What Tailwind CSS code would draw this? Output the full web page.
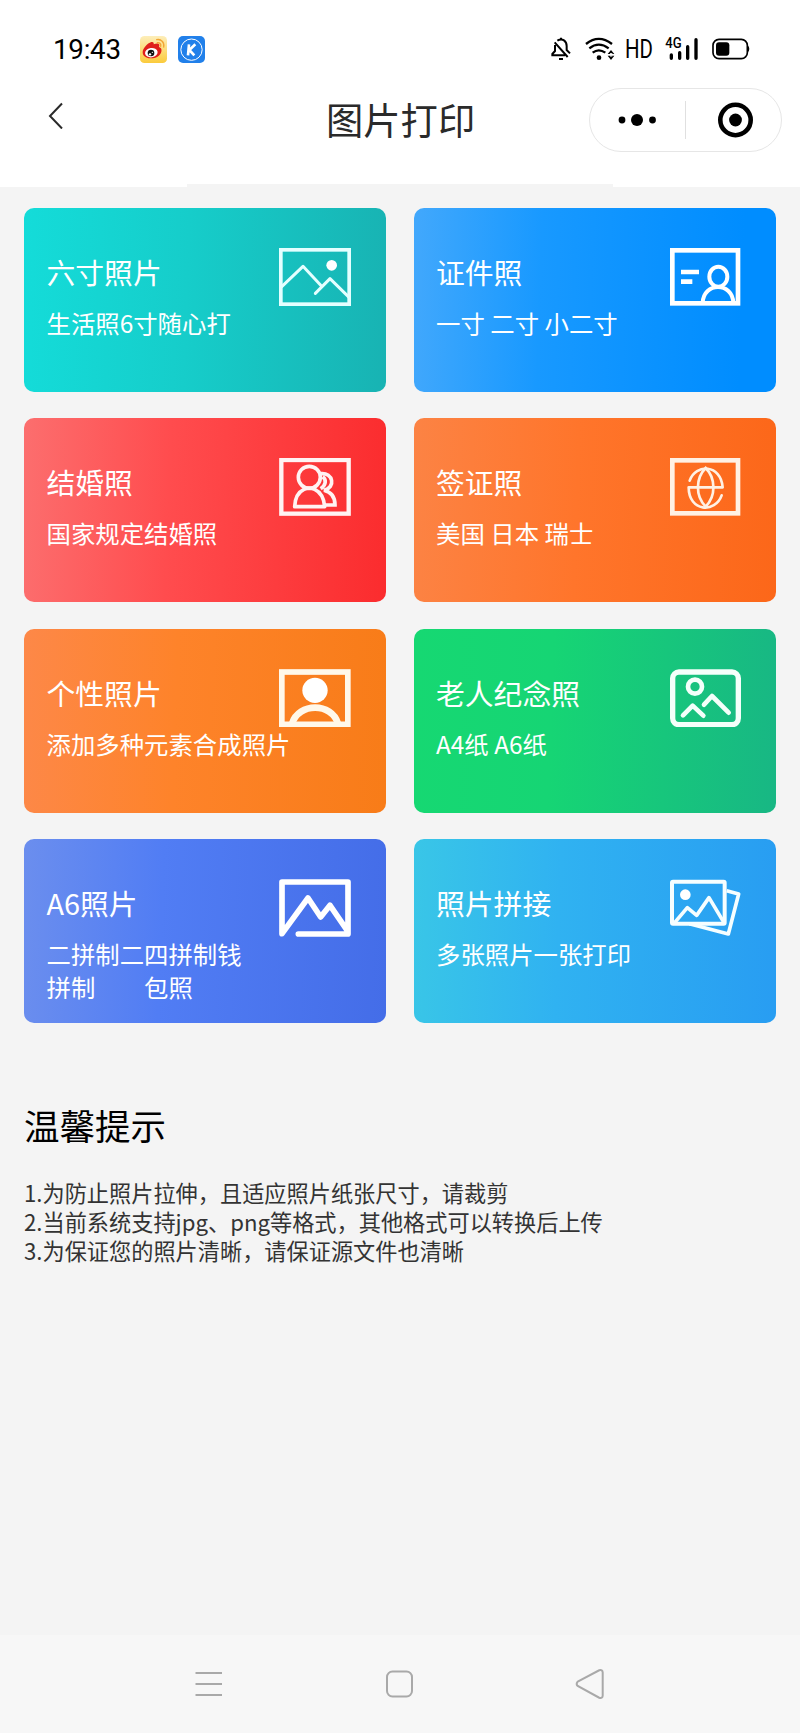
<!DOCTYPE html>
<html lang="zh-CN">
<head>
    <meta charset="UTF-8">
    <meta name="viewport" content="width=device-width, initial-scale=1.0">
    <title>图片打印</title>
    <script src="https://cdn.jsdelivr.net/npm/@tailwindcss/browser@4"></script>
    <style>
        body { font-family: 'Noto Sans CJK SC', sans-serif; }
    </style>
</head>
<body class="bg-[#f4f4f4] w-[800px] h-[1733px] flex flex-col font-normal overflow-hidden">

<!-- Status bar + nav bar -->
<header class="bg-white h-[187px] shrink-0 relative">
    <div class="flex items-center h-[98px] pl-[53px] pr-[50px] text-black">
        <span class="w-[68px] pt-[1px] text-[27.800px] leading-none tracking-[-0.3px] font-normal whitespace-nowrap" style="font-family: Roboto, sans-serif">19:43</span>
        <svg class="ml-[19px] w-[27px] h-[27px]" viewBox="420 106 81 81">
            <defs><linearGradient id="wb" x1="0" y1="0" x2="0" y2="1"><stop offset="0" stop-color="#fdeeba"/><stop offset="1" stop-color="#fbcb3c"/></linearGradient></defs>
            <rect x="420" y="106" width="81" height="81" rx="13" fill="url(#wb)"/>
            <path d="M428 155c0-12 14-27 26-31 7-1 8 3 7 7 8-4 17-4 17 2 0 3-1 5-1 6 6 2 9 6 7 14-3 13-17 20-31 20-14 1-25-7-25-18z" fill="#df1f1c"/>
            <ellipse cx="454" cy="156" rx="19" ry="14" fill="#fff" transform="rotate(-8 454 156)"/>
            <circle cx="453" cy="157" r="10" fill="#111"/>
            <circle cx="450" cy="161" r="3.5" fill="#fff"/><circle cx="457" cy="155" r="2" fill="#fff"/>
            <path d="M470 117c13-3 24 8 21 22M472 126c7-1 12 4 10 11" fill="none" stroke="#f2a535" stroke-width="4" stroke-linecap="round"/>
        </svg>
        <svg class="ml-[11px] w-[27px] h-[27px]" viewBox="535 106 81 81">
            <rect x="535" y="106" width="81" height="81" rx="15" fill="#2180ea"/>
            <circle cx="575.5" cy="147" r="32" fill="none" stroke="#fff" stroke-width="3"/>
            <path d="M568 131l-3 33M587 131l-18 17 15 16" fill="none" stroke="#fff" stroke-width="8"/>
        </svg>

        <svg class="ml-auto w-[22px] h-[24px]" viewBox="451 111 66 72" fill="none" stroke="#000" stroke-width="6">
            <path d="M462 127l39 44M470 122c16-10 28 2 28 16v12l10 10M463 135v18l-8 9v4h38"/>
            <path d="M481 113v5M475 177h12"/>
        </svg>
        <svg class="ml-[12px] w-[31px] h-[24px]" viewBox="554 111 93 72" fill="none" stroke="#000" stroke-width="7">
            <path d="M557 132q38-31 78 0M567 145q28-22 58 0M577 158q18-14 38 0"/>
            <circle cx="596" cy="173" r="7" fill="#000" stroke="none"/>
            <path d="M622 162l10-12 10 12zM622 167l10 13 10-13z" fill="#000" stroke="none"/>
            <path d="M629 161h7M629 168h7" stroke="#fff" stroke-width="3"/>
        </svg>
        <svg class="ml-[9px] w-[30px] h-[32px] overflow-visible" viewBox="0 -4 30 32">
            <text x="0" y="20.5" font-family="Roboto, sans-serif" font-size="25" font-weight="400" textLength="28" lengthAdjust="spacingAndGlyphs">HD</text>
        </svg>
        <svg class="ml-[10px] w-[34px] h-[32px] overflow-visible" viewBox="795 99 102 96">
            <text x="796" y="145" font-family="Roboto, sans-serif" font-size="42" font-weight="500" textLength="49" lengthAdjust="spacingAndGlyphs">4G</text>
            <path d="M814 165v10M839 158v17M863 140v35M888 119v56" stroke="#000" stroke-width="10" stroke-linecap="round"/>
        </svg>
        <svg class="ml-[13px] w-[38px] h-[24px]" viewBox="935 111 114 72">
            <rect x="938" y="118" width="103" height="58" rx="18" fill="none" stroke="#000" stroke-width="5"/>
            <rect x="947" y="127" width="40" height="40" rx="9"/>
            <path d="M1042 136q10 11 0 22z"/>
        </svg>
    </div>

    <div class="flex items-center h-[44px] pl-[47px] pr-[18px]">
        <svg class="w-[18px] h-[28px] -mt-[10px]" viewBox="0 0 18 28" fill="none" stroke="#2a2a2a" stroke-width="2"><path d="M15 2.5L3 15l12 12.5"/></svg>
        <h1 class="ml-[261px] w-[150px] -mt-[3px] text-[37.3px] leading-[44px] text-[#2a2a2a] whitespace-nowrap">图片打印</h1>
        <div class="ml-auto w-[193px] h-[64px] -mt-[1px] shrink-0 rounded-full border border-[#e6e6e6] flex items-center">
            <svg class="w-[95px] h-[20px]" viewBox="0 0 95 20"><circle cx="32" cy="10" r="3.4"/><circle cx="47" cy="10" r="6"/><circle cx="62.500" cy="10" r="3.4"/></svg>
            <div class="w-px h-[38px] bg-[#e0e0e0]"></div>
            <svg class="w-[95px] h-[38px]" viewBox="0 0 95 38"><circle cx="49.500" cy="19" r="15.200" fill="none" stroke="#000" stroke-width="4.600"/><circle cx="49.500" cy="19" r="6.400"/></svg>
        </div>
    </div>
    <div class="absolute left-[187px] bottom-0 w-[426px] h-[3px] bg-[#f4f4f4]"></div>
</header>

<main class="flex-1 pt-[21px] pl-[24px] pr-[24px]">
    <div class="grid grid-cols-[362px_362px] gap-x-[28px] gap-y-[26.300px] text-white">

        <section class="h-[184px] rounded-[10px] pt-[40px] pl-[22.500px] pr-[35px] bg-linear-[92deg,#14dcd9,#16cdca_45%,#18b3b3]">
            <div class="flex justify-between h-[58px]">
                <h2 class="text-[28.800px] leading-[47px]">六寸照片</h2>
                <svg class="w-[72px] h-[58px]" viewBox="837 159 216 174" fill="none" stroke="#e4ffff" stroke-width="9">
                    <rect x="842.500" y="164.500" width="205" height="163" stroke-width="11"/>
                    <path d="M846 274l63-60 56 60M946 295l44-44 55 54" stroke-linejoin="round" stroke-linecap="round"/>
                    <circle cx="995" cy="211" r="16" fill="#fff" stroke="none"/>
                </svg>
            </div>
            <p class="text-[24.400px] leading-[33px] whitespace-nowrap">生活照6寸随心打</p>
        </section>

        <section class="h-[184px] rounded-[10px] pt-[40px] pl-[22px] pr-[35px] bg-linear-[92deg,#42a8fc,#1899ff_35%,#008dff_90%]">
            <div class="flex justify-between h-[58px]">
                <h2 class="text-[28.800px] leading-[47px]">证件照</h2>
                <svg class="w-[72px] h-[58px]" viewBox="807 159 216 174" fill="none" stroke="#fff" stroke-width="12">
                    <rect x="817" y="166" width="197" height="159" stroke-width="14"/>
                    <path d="M843 231h54M843 260h34" stroke-width="14"/>
                    <ellipse cx="955" cy="245" rx="27" ry="30"/>
                    <path d="M908 324c2-64 90-64 92 0"/>
                </svg>
            </div>
            <p class="text-[24.400px] leading-[33px] whitespace-nowrap">一寸 二寸 小二寸</p>
        </section>

        <section class="h-[184px] rounded-[10px] pt-[40px] pl-[22.500px] pr-[35px] bg-linear-[92deg,#fc6e6e,#ff4c4e_40%,#fb2c2e]">
            <div class="flex justify-between h-[58px]">
                <h2 class="text-[28.800px] leading-[47px]">结婚照</h2>
                <svg class="w-[72px] h-[58px]" viewBox="837 160 216 174" fill="none" stroke="#fff3f3" stroke-width="11">
                    <rect x="844" y="166" width="202" height="161" stroke-width="13"/>
                    <circle cx="928" cy="218" r="33"/>
                    <path d="M884 306c1-27 13-45 28-52q16-7 32 0c15 7 28 25 30 52z" stroke-linejoin="round"/>
                    <path d="M962 207c38-4 46 42 10 50 21 5 33 17 33 44h-30M968 216c12 9 10 25-6 36"/>
                </svg>
            </div>
            <p class="text-[24.400px] leading-[33px] whitespace-nowrap">国家规定结婚照</p>
        </section>

        <section class="h-[184px] rounded-[10px] pt-[40px] pl-[22px] pr-[35px] bg-linear-[92deg,#fc8344,#ff752b_45%,#fc6719]">
            <div class="flex justify-between h-[58px]">
                <h2 class="text-[28.800px] leading-[47px]">签证照</h2>
                <svg class="w-[72px] h-[58px]" viewBox="807 160 216 174" fill="none" stroke="#fff1e4" stroke-width="8">
                    <rect x="817" y="167" width="197" height="159" stroke-width="14"/>
                    <path d="M869 228c18-52 94-50 99 20H866c0 74 80 78 99 24" stroke-linecap="round" stroke-linejoin="round"/>
                    <path d="M917 190c-31 31-31 85 0 116 31-31 31-85 0-116z"/>
                </svg>
            </div>
            <p class="text-[24.400px] leading-[33px] whitespace-nowrap">美国 日本 瑞士</p>
        </section>

        <section class="h-[184px] rounded-[10px] pt-[40px] pl-[22.500px] pr-[35px] bg-linear-[92deg,#fd8848,#fe832a_42%,#f87c18]">
            <div class="flex justify-between h-[58px]">
                <h2 class="text-[28.800px] leading-[47px]">个性照片</h2>
                <svg class="w-[72px] h-[58px]" viewBox="837 160 216 174" fill="none" stroke="#fff8ea" stroke-width="20">
                    <rect x="845.500" y="169" width="198" height="157" stroke-width="17"/>
                    <circle cx="945" cy="224" r="38" fill="#fff" stroke="none"/>
                    <path d="M876 324c20-64 119-64 138 0"/>
                </svg>
            </div>
            <p class="text-[24.400px] leading-[33px] whitespace-nowrap">添加多种元素合成照片</p>
        </section>

        <section class="h-[184px] rounded-[10px] pt-[40px] pl-[22px] pr-[35px] bg-linear-[92deg,#16d872,#16d574_38%,#18b784]">
            <div class="flex justify-between h-[58px]">
                <h2 class="text-[28.800px] leading-[47px]">老人纪念照</h2>
                <svg class="w-[72px] h-[58px]" viewBox="807 160 216 174" fill="none" stroke="#f4fffa" stroke-width="14" stroke-linecap="round" stroke-linejoin="round">
                    <rect x="818" y="169" width="197" height="158" rx="19" stroke-width="16"/>
                    <circle cx="885" cy="213" r="21"/>
                    <path d="M849 299l29-29 32 30M912 267l24-26 50 50"/>
                </svg>
            </div>
            <p class="text-[24.400px] leading-[33px] whitespace-nowrap">A4纸 A6纸</p>
        </section>

        <section class="h-[184px] rounded-[10px] pt-[40px] pl-[22.500px] pr-[35px] bg-linear-[92deg,#6b8eee,#517df4_38%,#446de8]">
            <div class="flex justify-between h-[58px]">
                <h2 class="text-[28.800px] leading-[47px]">A6照片</h2>
                <svg class="w-[72px] h-[58px]" viewBox="837 162 216 174" fill="none" stroke="#fff" stroke-width="17" stroke-linecap="round" stroke-linejoin="round">
                    <path d="M895 327h149V171H846v155l78-107 38 57 28-35 52 76"/>
                </svg>
            </div>
            <p class="text-[24.400px] leading-[33px] whitespace-nowrap">二拼制二四拼制钱<br>拼制　　包照</p>
        </section>

        <section class="h-[184px] rounded-[10px] pt-[40px] pl-[22px] pr-[35px] bg-linear-[92deg,#39c6e7,#30b2f1_40%,#289df2]">
            <div class="flex justify-between h-[58px]">
                <h2 class="text-[28.800px] leading-[47px]">照片拼接</h2>
                <svg class="w-[72px] h-[58px]" viewBox="807 162 216 174" fill="none" stroke="#f6feff" stroke-width="12" stroke-linejoin="round">
                    <rect x="816" y="170" width="158" height="126" rx="3"/>
                    <path d="M980 197l36 10-31 120-117-31" stroke-width="11"/>
                    <path d="M824 293l38-45 28 23 37-53 45 75" stroke-width="11"/>
                    <circle cx="856" cy="209" r="16" fill="#fff" stroke="none"/>
                </svg>
            </div>
            <p class="text-[24.400px] leading-[33px] whitespace-nowrap">多张照片一张打印</p>
        </section>
    </div>

    <h3 class="mt-[78px] text-[35.500px] leading-[48px] text-black">温馨提示</h3>
    <div class="mt-[29px] text-[22.200px] leading-[29px] text-[#333] whitespace-nowrap">
        <p>1.为防止照片拉伸，且适应照片纸张尺寸，请裁剪</p>
        <p>2.当前系统支持jpg、png等格式，其他格式可以转换后上传</p>
        <p>3.为保证您的照片清晰，请保证源文件也清晰</p>
    </div>
</main>

<!-- System navigation -->
<nav class="h-[98px] shrink-0 bg-[#f7f7f7] pl-[195px] pr-[196px] flex items-center justify-between">
    <svg class="w-[27px] h-[30px]" viewBox="0 0 27 30" stroke="#a9a9a9" stroke-width="2.200"><path d="M0.500 4h26.500M0.500 15h26.500M0.500 26h26.500"/></svg>
    <svg class="w-[28px] h-[30px]" viewBox="-0.5 0 28 30" fill="none" stroke="#a9a9a9" stroke-width="2"><rect x="1.500" y="2.500" width="25" height="25" rx="5.500"/></svg>
    <svg class="w-[29px] h-[30px]" viewBox="-0.7 0 29 30" fill="none" stroke="#a9a9a9" stroke-width="2"><path d="M2 12.700L23.500 1.300q3.300-1 3.500 2v23.400q-0.200 3-3.500 2L2 17q-2-2 0-4.300z"/></svg>
</nav>

</body>
</html>
